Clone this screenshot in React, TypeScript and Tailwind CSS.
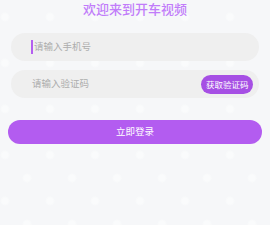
export default function App() {
  return (
    <div
      className="w-[270px] h-[225px] overflow-hidden bg-[#f6f7f9] bg-[radial-gradient(circle_at_5px_17px,#fafbfc_0px,#fafbfc_3px,transparent_5px),radial-gradient(circle_at_27px_40px,#fafbfc_0px,#fafbfc_3px,transparent_5px)] bg-size-[45px_46px]"
      style={{ fontFamily: '"Noto Sans CJK SC", "Noto Sans", sans-serif' }}
    >
      <div className="flex flex-col">
        <div className="h-[16px] flex items-center justify-center text-[13px] font-medium leading-none text-[#c17cfa]">
          欢迎来到开车视频
        </div>
        <div className="mt-[17px] mx-[11px] h-[28px] rounded-full bg-[#efefef] flex items-center pl-[20px]">
          <span className="w-[2px] h-[14px] bg-[#b45ff0] mr-[1px]" />
          <span className="text-[9.5px] leading-none text-[#adadad]">请输入手机号</span>
        </div>
        <div className="mt-[9px] mx-[11px] h-[28px] rounded-full bg-[#efefef] flex items-center justify-between pl-[21px] pr-[6px]">
          <span className="text-[9.5px] leading-none text-[#adadad]">请输入验证码</span>
          <span className="h-[19px] px-[4.5px] rounded-full bg-[#a64fe4] text-white text-[8.5px] leading-none flex items-center">
            获取验证码
          </span>
        </div>
        <div className="mt-[22px] mx-[8px] h-[24px] rounded-full bg-[#b35cf0] flex items-center justify-center text-white text-[9.5px] leading-none">
          立即登录
        </div>
      </div>
    </div>
  );
}
